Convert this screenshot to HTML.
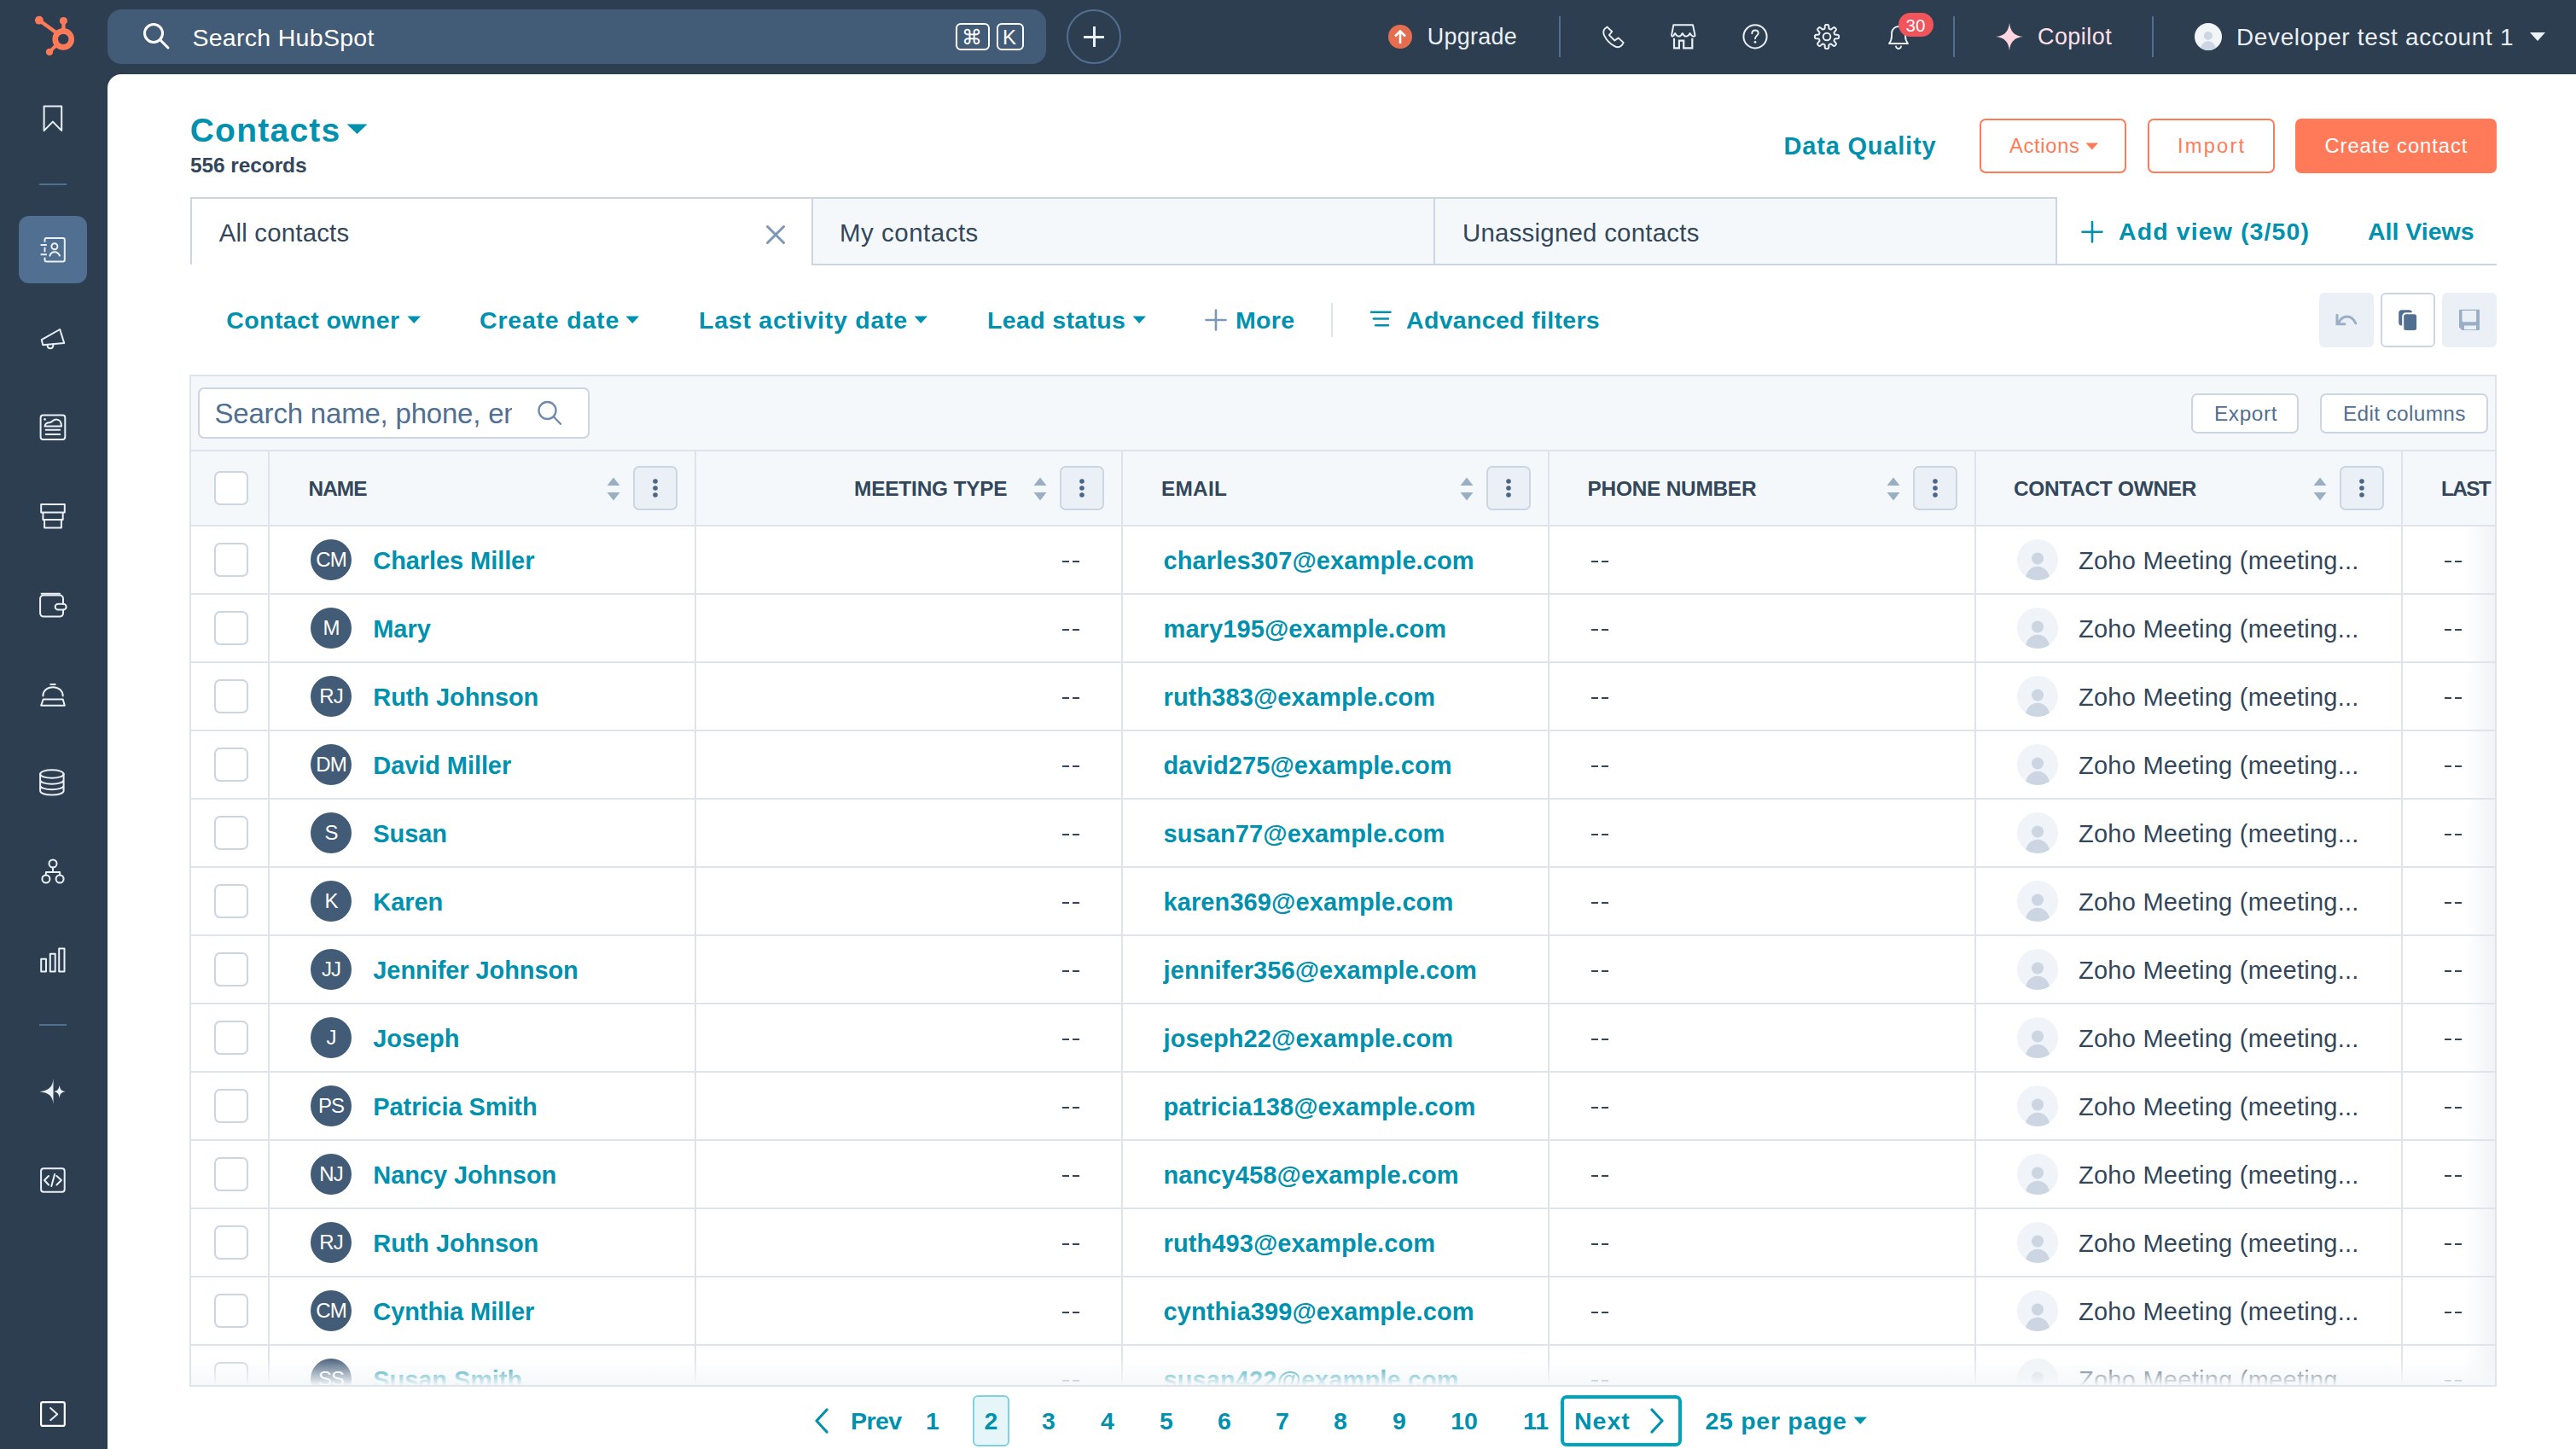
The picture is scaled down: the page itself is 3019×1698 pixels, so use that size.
<!DOCTYPE html><html><head><meta charset="utf-8"><style>
html,body{margin:0;padding:0;width:3019px;height:1698px;overflow:hidden;background:#2d3e50}
body{position:relative;font-family:"Liberation Sans",sans-serif}
.t{position:absolute;white-space:nowrap}
</style></head><body>
<div style="position:absolute;left:0px;top:0px;width:3019px;height:87px;background:#2d3e50"></div>
<div style="position:absolute;left:0px;top:0px;width:126px;height:1698px;background:#2d3e50"></div>
<div style="position:absolute;left:126px;top:87px;width:2893px;height:1611px;background:#fff;border-top-left-radius:16px"></div>
<svg style="position:absolute;left:30px;top:10px" width="70" height="65" viewBox="0 0 70 65"><g fill="#ff7a59" stroke="#ff7a59">
<circle cx="44.2" cy="35.9" r="9.5" fill="none" stroke-width="6.6"/>
<circle cx="44.4" cy="14.4" r="4.5" stroke="none"/>
<rect x="42.3" y="14" width="4.3" height="14" stroke="none"/>
<circle cx="15.9" cy="13.7" r="4.9" stroke="none"/>
<line x1="15.9" y1="13.7" x2="37" y2="29" stroke-width="4.2"/>
<circle cx="28" cy="50.9" r="4.2" stroke="none"/>
<line x1="28" y1="50.9" x2="37" y2="42" stroke-width="4"/>
</g></svg>
<div style="position:absolute;left:126px;top:11px;width:1100px;height:64px;background:#425b76;border-radius:16px"></div>
<svg style="position:absolute;left:165px;top:24px" width="40" height="40" viewBox="0 0 40 40"><circle cx="15" cy="15" r="10.5" fill="none" stroke="#fff" stroke-width="3"/><line x1="22.5" y1="22.5" x2="32" y2="32" stroke="#fff" stroke-width="3" stroke-linecap="round"/></svg>
<div class="t" style="left:225.4px;top:29.9px;font-size:28.5px;line-height:28.5px;color:#fff;letter-spacing:0.3px;">Search HubSpot</div>
<div style="position:absolute;left:1120px;top:27px;width:40px;height:32px;box-sizing:border-box;border:2px solid #fff;border-radius:6px"></div>
<div class="t" style="left:1127.0px;top:31.7px;font-size:24px;line-height:24px;color:#fff;">&#8984;</div>
<div style="position:absolute;left:1168px;top:27px;width:32px;height:32px;box-sizing:border-box;border:2px solid #fff;border-radius:6px"></div>
<div class="t" style="left:1175.0px;top:31.7px;font-size:24px;line-height:24px;color:#fff;">K</div>
<div style="position:absolute;left:1250px;top:11px;width:64px;height:64px;box-sizing:border-box;border:2px solid #516f90;border-radius:50%"></div>
<div style="position:absolute;left:1270px;top:41.5px;width:24px;height:3px;background:#eaf0f6"></div>
<div style="position:absolute;left:1280.5px;top:31px;width:3px;height:24px;background:#eaf0f6"></div>
<div style="position:absolute;left:1627px;top:29px;width:28px;height:28px;background:#e66e50;border-radius:50%"></div>
<svg style="position:absolute;left:1627px;top:29px" width="28" height="28" viewBox="0 0 28 28"><path d="M14 22V8M8 13.5L14 7.5L20 13.5" fill="none" stroke="#fff" stroke-width="2.6"/></svg>
<div class="t" style="left:1672.8px;top:29.7px;font-size:26.9px;line-height:26.9px;color:#eaf0f6;letter-spacing:0.3px;">Upgrade</div>
<div style="position:absolute;left:1827px;top:19px;width:2px;height:48px;background:#516f90"></div>
<div style="position:absolute;left:2289px;top:19px;width:2px;height:48px;background:#516f90"></div>
<div style="position:absolute;left:2522px;top:19px;width:2px;height:48px;background:#516f90"></div>
<svg style="position:absolute;left:1876px;top:28px" width="30" height="30" viewBox="0 0 30 30"><path d="M7.6 3.6L13.2 9L9.9 13.1L16.3 19.5L20.6 16.4L26.6 21.9L24.6 25.2C22.5 27.6 19.2 27.8 15.8 25.9C11 23.2 6.5 18.5 4.2 13.6C2.8 10.4 3 7.5 5 5.5Z" fill="none" stroke="#eaf0f6" stroke-width="1.9" stroke-linejoin="round" stroke-linecap="round"/></svg>
<svg style="position:absolute;left:1957px;top:27px" width="32" height="32" viewBox="0 0 32 32"><path d="M4.3 2.3H27L29.5 14.2C29.5 15.2 28.6 15.6 27.6 15.6C25.8 15.6 24.5 13.6 23.6 12C22.7 13.8 21.2 15.6 19.1 15.6C17 15.6 15.6 13.8 14.8 12C14 13.8 12.5 15.6 10.4 15.6C8.3 15.6 7 13.8 6.1 12C5.2 13.8 4 15.6 3.1 15.6C2.4 15.6 1.9 15 2.1 14Z" fill="none" stroke="#eaf0f6" stroke-width="1.9" stroke-linejoin="round" stroke-linecap="round"/><path d="M5 17.7V29.3H10.9V20.7H16.2V29.3H26.3V17.7" fill="none" stroke="#eaf0f6" stroke-width="2.2" stroke-linejoin="miter"/></svg>
<svg style="position:absolute;left:2041px;top:27px" width="32" height="32" viewBox="0 0 32 32"><circle cx="16" cy="15.8" r="13.6" fill="none" stroke="#eaf0f6" stroke-width="2"/><path d="M12.3 12.3C12.3 9.8 14 8.5 16 8.5C18 8.5 19.7 9.8 19.7 11.8C19.7 14.3 16 15 16 18.3" fill="none" stroke="#eaf0f6" stroke-width="1.9" stroke-linejoin="round" stroke-linecap="round" stroke-width="2"/><circle cx="16" cy="22.3" r="1.4" fill="#eaf0f6"/></svg>
<svg style="position:absolute;left:2125px;top:26.5px" width="32" height="32" viewBox="0 0 32 32"><path d="M16.00 1.90 L16.44 1.91 L16.88 1.95 L17.32 2.05 L17.73 2.28 L18.08 2.85 L18.28 4.05 L18.35 5.48 L18.48 6.35 L18.69 6.73 L18.95 6.92 L19.22 7.05 L19.50 7.17 L19.77 7.28 L20.05 7.39 L20.34 7.49 L20.65 7.54 L21.07 7.42 L21.78 6.90 L22.84 5.94 L23.82 5.23 L24.48 5.07 L24.93 5.20 L25.31 5.44 L25.65 5.73 L25.97 6.03 L26.27 6.35 L26.56 6.69 L26.80 7.07 L26.93 7.52 L26.77 8.18 L26.06 9.16 L25.10 10.22 L24.58 10.93 L24.46 11.35 L24.51 11.66 L24.61 11.95 L24.72 12.23 L24.83 12.50 L24.95 12.78 L25.08 13.05 L25.27 13.31 L25.65 13.52 L26.52 13.65 L27.95 13.72 L29.15 13.92 L29.72 14.27 L29.95 14.68 L30.05 15.12 L30.09 15.56 L30.10 16.00 L30.09 16.44 L30.05 16.88 L29.95 17.32 L29.72 17.73 L29.15 18.08 L27.95 18.28 L26.52 18.35 L25.65 18.48 L25.27 18.69 L25.08 18.95 L24.95 19.22 L24.83 19.50 L24.72 19.77 L24.61 20.05 L24.51 20.34 L24.46 20.65 L24.58 21.07 L25.10 21.78 L26.06 22.84 L26.77 23.82 L26.93 24.48 L26.80 24.93 L26.56 25.31 L26.27 25.65 L25.97 25.97 L25.65 26.27 L25.31 26.56 L24.93 26.80 L24.48 26.93 L23.82 26.77 L22.84 26.06 L21.78 25.10 L21.07 24.58 L20.65 24.46 L20.34 24.51 L20.05 24.61 L19.77 24.72 L19.50 24.83 L19.22 24.95 L18.95 25.08 L18.69 25.27 L18.48 25.65 L18.35 26.52 L18.28 27.95 L18.08 29.15 L17.73 29.72 L17.32 29.95 L16.88 30.05 L16.44 30.09 L16.00 30.10 L15.56 30.09 L15.12 30.05 L14.68 29.95 L14.27 29.72 L13.92 29.15 L13.72 27.95 L13.65 26.52 L13.52 25.65 L13.31 25.27 L13.05 25.08 L12.78 24.95 L12.50 24.83 L12.23 24.72 L11.95 24.61 L11.66 24.51 L11.35 24.46 L10.93 24.58 L10.22 25.10 L9.16 26.06 L8.18 26.77 L7.52 26.93 L7.07 26.80 L6.69 26.56 L6.35 26.27 L6.03 25.97 L5.73 25.65 L5.44 25.31 L5.20 24.93 L5.07 24.48 L5.23 23.82 L5.94 22.84 L6.90 21.78 L7.42 21.07 L7.54 20.65 L7.49 20.34 L7.39 20.05 L7.28 19.77 L7.17 19.50 L7.05 19.22 L6.92 18.95 L6.73 18.69 L6.35 18.48 L5.48 18.35 L4.05 18.28 L2.85 18.08 L2.28 17.73 L2.05 17.32 L1.95 16.88 L1.91 16.44 L1.90 16.00 L1.91 15.56 L1.95 15.12 L2.05 14.68 L2.28 14.27 L2.85 13.92 L4.05 13.72 L5.48 13.65 L6.35 13.52 L6.73 13.31 L6.92 13.05 L7.05 12.78 L7.17 12.50 L7.28 12.23 L7.39 11.95 L7.49 11.66 L7.54 11.35 L7.42 10.93 L6.90 10.22 L5.94 9.16 L5.23 8.18 L5.07 7.52 L5.20 7.07 L5.44 6.69 L5.73 6.35 L6.03 6.03 L6.35 5.73 L6.69 5.44 L7.07 5.20 L7.52 5.07 L8.18 5.23 L9.16 5.94 L10.22 6.90 L10.93 7.42 L11.35 7.54 L11.66 7.49 L11.95 7.39 L12.23 7.28 L12.50 7.17 L12.78 7.05 L13.05 6.92 L13.31 6.73 L13.52 6.35 L13.65 5.48 L13.72 4.05 L13.92 2.85 L14.27 2.28 L14.68 2.05 L15.12 1.95 L15.56 1.91Z" fill="none" stroke="#eaf0f6" stroke-width="2" stroke-linejoin="round"/><circle cx="16" cy="16" r="4.3" fill="none" stroke="#eaf0f6" stroke-width="2"/></svg>
<svg style="position:absolute;left:2209px;top:25.5px" width="32" height="34" viewBox="0 0 32 34"><path d="M5 25C7 22.5 8 20 8 16V13C8 8.5 11.5 5 16 5C20.5 5 24 8.5 24 13V16C24 20 25 22.5 27 25Z M13 28.5C13.5 30 14.5 31 16 31C17.5 31 18.5 30 19 28.5" fill="none" stroke="#eaf0f6" stroke-width="1.9" stroke-linejoin="round" stroke-linecap="round"/></svg>
<div style="position:absolute;left:2225px;top:15px;width:41px;height:28px;background:#f2545b;border-radius:14px"></div>
<div class="t" style="left:2233.5px;top:19.6px;font-size:20.5px;line-height:20.5px;color:#fff;">30</div>
<svg style="position:absolute;left:2338px;top:26px" width="34" height="34" viewBox="0 0 34 34"><path d="M17 1C18 11 23 16 33 17C23 18 18 23 17 33C16 23 11 18 1 17C11 16 16 11 17 1Z" fill="#ffd6e0"/></svg>
<div class="t" style="left:2388.0px;top:29.7px;font-size:26.9px;line-height:26.9px;color:#ffe0ea;letter-spacing:0.5px;">Copilot</div>
<svg style="position:absolute;left:2572px;top:27px" width="32" height="32" viewBox="0 0 32 32"><clipPath id="acl"><circle cx="16" cy="16" r="16"/></clipPath><circle cx="16" cy="16" r="16" fill="#f2f5f8"/><circle cx="15.9" cy="15" r="5" fill="#cbd6e2"/><path d="M6.5 33C7 25.5 11 21.2 16 21.2C21 21.2 25 25.5 25.5 33Z" fill="#cbd6e2" clip-path="url(#acl)"/></svg>
<div class="t" style="left:2621.0px;top:29.7px;font-size:27.9px;line-height:27.9px;color:#eaf0f6;letter-spacing:0.69px;">Developer test account 1</div>
<svg style="position:absolute;left:2964px;top:37px" width="20" height="12" viewBox="0 0 20 12"><path d="M1 1H19L10 11Z" fill="#eaf0f6"/></svg>
<svg style="position:absolute;left:44px;top:121px" width="36" height="36" viewBox="0 0 36 36"><path d="M7.6 3.5H28.2V32.1L17.9 21.6L7.6 32.1Z" fill="none" stroke="#eaf0f6" stroke-width="2" stroke-linejoin="round" stroke-linecap="round"/></svg>
<div style="position:absolute;left:46px;top:215px;width:32px;height:2px;background:#516f90"></div>
<div style="position:absolute;left:22px;top:253px;width:80px;height:79px;background:#516f90;border-radius:12px"></div>
<svg style="position:absolute;left:44px;top:275px" width="36" height="36" viewBox="0 0 36 36"><path d="M8.5 8V6.1C8.5 5 9.3 4.1 10.4 4.1H29.8C30.9 4.1 31.8 5 31.8 6.1V29.6C31.8 30.7 30.9 31.6 29.8 31.6H10.4C9.3 31.6 8.5 30.7 8.5 29.6V27.5 M8.5 15.5V19.5" fill="none" stroke="#eaf0f6" stroke-width="2" stroke-linejoin="round" stroke-linecap="round"/><path d="M4.3 11.9H10.1M4.3 23.2H10.1" fill="none" stroke="#eaf0f6" stroke-width="2" stroke-linejoin="round" stroke-linecap="round"/><circle cx="19.9" cy="13.8" r="3.5" fill="none" stroke="#eaf0f6" stroke-width="2" stroke-linejoin="round" stroke-linecap="round"/><path d="M14.4 24.7C15.5 21.5 17.5 20.3 20 20.3C22.5 20.3 24.5 21.5 26 24.7" fill="none" stroke="#eaf0f6" stroke-width="2" stroke-linejoin="round" stroke-linecap="round"/></svg>
<svg style="position:absolute;left:44px;top:378px" width="36" height="36" viewBox="0 0 36 36"><path d="M4.7 20.1L26.2 8L31.2 24L6.3 26.2Z" fill="none" stroke="#eaf0f6" stroke-width="2" stroke-linejoin="round" stroke-linecap="round"/><path d="M11.5 26C11.5 28.5 13 30.3 15 30.3C17 30.3 18.5 28.5 18.5 25.5" fill="none" stroke="#eaf0f6" stroke-width="2" stroke-linejoin="round" stroke-linecap="round"/></svg>
<svg style="position:absolute;left:44px;top:482px" width="36" height="36" viewBox="0 0 36 36"><rect x="3.6" y="4.4" width="28.7" height="28.7" rx="3" fill="none" stroke="#eaf0f6" stroke-width="2" stroke-linejoin="round" stroke-linecap="round"/><path d="M9.7 21.8H26.2M9.7 27H26.2" fill="none" stroke="#eaf0f6" stroke-width="2" stroke-linejoin="round" stroke-linecap="round"/><path d="M8.5 17.5C9 14.5 11 13.3 14 13.3C17 13.3 18 9.5 22 9.5C25.5 9.5 28 12.5 28 17.5Z" fill="none" stroke="#eaf0f6" stroke-width="2" stroke-linejoin="round" stroke-linecap="round"/><circle cx="8.6" cy="9.4" r="1.3" fill="#eaf0f6"/></svg>
<svg style="position:absolute;left:44px;top:587px" width="36" height="36" viewBox="0 0 36 36"><path d="M4.2 4.1H31.8V13.6H4.2Z M6.4 13.6V22H29.7V13.6 M8.1 22V31.6H27.9V22" fill="none" stroke="#eaf0f6" stroke-width="2" stroke-linejoin="round" stroke-linecap="round"/></svg>
<svg style="position:absolute;left:44px;top:691px" width="36" height="36" viewBox="0 0 36 36"><path d="M4.6 4.7H26" fill="none" stroke="#eaf0f6" stroke-width="2" stroke-linejoin="round" stroke-linecap="round"/><path d="M30 16.7V10.5C30 8.3 28.2 6.5 26 6.5H7.1C4.9 6.5 3.1 8.3 3.1 10.5V27.6C3.1 29.8 4.9 31.6 7.1 31.6H26C28.2 31.6 30 29.8 30 27.6V23.6" fill="none" stroke="#eaf0f6" stroke-width="2" stroke-linejoin="round" stroke-linecap="round"/><rect x="20.7" y="16.7" width="12.9" height="6.9" rx="3.4" fill="none" stroke="#eaf0f6" stroke-width="2" stroke-linejoin="round" stroke-linecap="round"/></svg>
<svg style="position:absolute;left:44px;top:795px" width="36" height="36" viewBox="0 0 36 36"><path d="M6.4 20.5C6.4 14.5 11.5 10.2 18 10.2C24.5 10.2 29.7 14.5 29.7 20.5 M6.7 24.5H29.7L31.8 31.7H4.2Z M15.3 6.9H20.7" fill="none" stroke="#eaf0f6" stroke-width="2" stroke-linejoin="round" stroke-linecap="round"/></svg>
<svg style="position:absolute;left:44px;top:899px" width="36" height="36" viewBox="0 0 36 36"><ellipse cx="16.85" cy="8" rx="13.75" ry="4.8" fill="none" stroke="#eaf0f6" stroke-width="2" stroke-linejoin="round" stroke-linecap="round"/><path d="M3.1 8V27.8C3.1 30.5 9.2 32.6 16.85 32.6C24.5 32.6 30.6 30.5 30.6 27.8V8 M3.1 15C3.1 17.7 9.2 19.8 16.85 19.8C24.5 19.8 30.6 17.7 30.6 15 M3.1 21.5C3.1 24.2 9.2 26.3 16.85 26.3C24.5 26.3 30.6 24.2 30.6 21.5" fill="none" stroke="#eaf0f6" stroke-width="2" stroke-linejoin="round" stroke-linecap="round"/></svg>
<svg style="position:absolute;left:44px;top:1003px" width="36" height="36" viewBox="0 0 36 36"><circle cx="18" cy="9" r="4.5" fill="none" stroke="#eaf0f6" stroke-width="2" stroke-linejoin="round" stroke-linecap="round"/><circle cx="9.9" cy="27" r="4.5" fill="none" stroke="#eaf0f6" stroke-width="2" stroke-linejoin="round" stroke-linecap="round"/><circle cx="26.1" cy="27" r="4.5" fill="none" stroke="#eaf0f6" stroke-width="2" stroke-linejoin="round" stroke-linecap="round"/><path d="M18 13.5V18.9 M9.9 22.5V18.9H26.1V22.5" fill="none" stroke="#eaf0f6" stroke-width="2" stroke-linejoin="round" stroke-linecap="round"/></svg>
<svg style="position:absolute;left:44px;top:1107px" width="36" height="36" viewBox="0 0 36 36"><rect x="4.2" y="16.8" width="5.8" height="14.7" fill="none" stroke="#eaf0f6" stroke-width="2" stroke-linejoin="round" stroke-linecap="round"/><rect x="14.8" y="10.8" width="5.9" height="20.7" fill="none" stroke="#eaf0f6" stroke-width="2" stroke-linejoin="round" stroke-linecap="round"/><rect x="25.2" y="4.6" width="6.3" height="26.9" fill="none" stroke="#eaf0f6" stroke-width="2" stroke-linejoin="round" stroke-linecap="round"/></svg>
<div style="position:absolute;left:46px;top:1200px;width:32px;height:2px;background:#516f90"></div>
<svg style="position:absolute;left:44px;top:1261px" width="36" height="36" viewBox="0 0 36 36"><path d="M18.5 2.2C18 12 14 17 2.5 18.2C14 19.5 18 24 18.5 33.7Z" fill="#eaf0f6"/><path d="M25.7 10.5C26.3 15 27.5 17.5 32.8 18.2C27.5 19 26.3 21 25.7 26C25 21 23.8 19 19 18.2C23.8 17.5 25 15 25.7 10.5Z" fill="#eaf0f6"/></svg>
<svg style="position:absolute;left:44px;top:1365px" width="36" height="36" viewBox="0 0 36 36"><rect x="4.1" y="4.2" width="27.6" height="27.6" rx="3" fill="none" stroke="#eaf0f6" stroke-width="2" stroke-linejoin="round" stroke-linecap="round"/><path d="M13 13L8 18L13 23.5 M20.1 11L16.3 25 M22.4 13L27.9 18L22.4 23.5" fill="none" stroke="#eaf0f6" stroke-width="2" stroke-linejoin="round" stroke-linecap="round"/></svg>
<svg style="position:absolute;left:44px;top:1638px" width="36" height="36" viewBox="0 0 36 36"><rect x="4.1" y="5.2" width="27.7" height="27.7" rx="2" fill="none" stroke="#fff" stroke-width="2.2"/><path d="M15.2 11.9L23.2 19.2L15.2 26.2" fill="none" stroke="#eaf0f6" stroke-width="2" stroke-linejoin="round" stroke-linecap="round" stroke-width="2.5"/></svg>
<div class="t" style="left:222.7px;top:133.0px;font-size:39px;line-height:39px;color:#0091ae;font-weight:700;letter-spacing:1.25px;">Contacts</div>
<svg style="position:absolute;left:406px;top:145px" width="26" height="13" viewBox="0 0 26 13"><path d="M0.5 0.5H24.5L12.5 12Z" fill="#0091ae"/></svg>
<div class="t" style="left:223.0px;top:182.1px;font-size:24.5px;line-height:24.5px;color:#33475b;font-weight:700;letter-spacing:-0.1px;">556 records</div>
<div class="t" style="left:2090.5px;top:157.2px;font-size:29px;line-height:29px;color:#0091ae;font-weight:700;letter-spacing:0.8px;">Data Quality</div>
<div style="position:absolute;left:2320px;top:139px;width:172px;height:64px;box-sizing:border-box;border:2px solid #ff7a59;border-radius:7px;background:#fff"></div>
<div class="t" style="left:2355.0px;top:159.9px;font-size:23.7px;line-height:23.7px;color:#ff7a59;letter-spacing:0.7px;">Actions</div>
<svg style="position:absolute;left:2444px;top:167px" width="16" height="9" viewBox="0 0 16 9"><path d="M0.5 0.5H15L7.7 8.5Z" fill="#ff7a59"/></svg>
<div style="position:absolute;left:2517px;top:139px;width:149px;height:64px;box-sizing:border-box;border:2px solid #ff7a59;border-radius:7px;background:#fff"></div>
<div class="t" style="left:2552.0px;top:159.9px;font-size:23.7px;line-height:23.7px;color:#ff7a59;letter-spacing:2.2px;">Import</div>
<div style="position:absolute;left:2690px;top:139px;width:236px;height:64px;background:#ff7a59;border-radius:7px"></div>
<div class="t" style="left:2724.4px;top:159.9px;font-size:23.7px;line-height:23.7px;color:#fff;letter-spacing:1.0px;">Create contact</div>
<div style="position:absolute;left:223px;top:231px;width:728px;height:79px;box-sizing:border-box;border-top:2px solid #cbd6e2;border-left:2px solid #cbd6e2;background:#fff"></div>
<div style="position:absolute;left:951px;top:231px;width:731px;height:80px;box-sizing:border-box;border:2px solid #cbd6e2;background:#f5f8fa"></div>
<div style="position:absolute;left:1680px;top:231px;width:731px;height:80px;box-sizing:border-box;border:2px solid #cbd6e2;background:#f5f8fa"></div>
<div style="position:absolute;left:2411px;top:309px;width:515px;height:2px;background:#cbd6e2"></div>
<div class="t" style="left:256.7px;top:258.2px;font-size:29.4px;line-height:29.4px;color:#33475b;letter-spacing:0.2px;">All contacts</div>
<svg style="position:absolute;left:896px;top:262px" width="26" height="26" viewBox="0 0 26 26"><path d="M3.5 3.5L22.5 22.5M22.5 3.5L3.5 22.5" stroke="#7c98b6" stroke-width="3" stroke-linecap="round"/></svg>
<div class="t" style="left:984.0px;top:258.2px;font-size:29.4px;line-height:29.4px;color:#33475b;letter-spacing:0.55px;">My contacts</div>
<div class="t" style="left:1714.0px;top:258.2px;font-size:29.4px;line-height:29.4px;color:#33475b;letter-spacing:0.25px;">Unassigned contacts</div>
<svg style="position:absolute;left:2437px;top:256.5px" width="30" height="30" viewBox="0 0 30 30"><path d="M15 3V26.5M3.5 14.8H26.5" stroke="#0091ae" stroke-width="2.6" stroke-linecap="round"/></svg>
<div class="t" style="left:2483.0px;top:256.9px;font-size:28.5px;line-height:28.5px;color:#0091ae;font-weight:700;letter-spacing:1.1px;">Add view (3/50)</div>
<div class="t" style="left:2775.0px;top:256.9px;font-size:28.5px;line-height:28.5px;color:#0091ae;font-weight:700;">All Views</div>
<div class="t" style="left:265.3px;top:361.0px;font-size:28.5px;line-height:28.5px;color:#0091ae;font-weight:700;letter-spacing:0.4px;">Contact owner</div>
<svg style="position:absolute;left:476.5px;top:370px" width="17" height="10" viewBox="0 0 17 10"><path d="M0.5 0.5H16L8.2 9Z" fill="#0091ae"/></svg>
<div class="t" style="left:562.0px;top:361.0px;font-size:28.5px;line-height:28.5px;color:#0091ae;font-weight:700;letter-spacing:0.8px;">Create date</div>
<svg style="position:absolute;left:733px;top:370px" width="17" height="10" viewBox="0 0 17 10"><path d="M0.5 0.5H16L8.2 9Z" fill="#0091ae"/></svg>
<div class="t" style="left:819.0px;top:361.0px;font-size:28.5px;line-height:28.5px;color:#0091ae;font-weight:700;letter-spacing:0.76px;">Last activity date</div>
<svg style="position:absolute;left:1071px;top:370px" width="17" height="10" viewBox="0 0 17 10"><path d="M0.5 0.5H16L8.2 9Z" fill="#0091ae"/></svg>
<div class="t" style="left:1157.0px;top:361.0px;font-size:28.5px;line-height:28.5px;color:#0091ae;font-weight:700;letter-spacing:0.35px;">Lead status</div>
<svg style="position:absolute;left:1326.5px;top:370px" width="17" height="10" viewBox="0 0 17 10"><path d="M0.5 0.5H16L8.2 9Z" fill="#0091ae"/></svg>
<svg style="position:absolute;left:1410px;top:360px" width="30" height="30" viewBox="0 0 30 30"><path d="M15 3.5V26.5M3.5 15H26.5" stroke="#7c98b6" stroke-width="2.6" stroke-linecap="round"/></svg>
<div class="t" style="left:1448.0px;top:361.0px;font-size:28.5px;line-height:28.5px;color:#0091ae;font-weight:700;letter-spacing:0.3px;">More</div>
<div style="position:absolute;left:1560px;top:355px;width:2px;height:40px;background:#dfe3eb"></div>
<svg style="position:absolute;left:1603px;top:362px" width="30" height="26" viewBox="0 0 30 26"><path d="M4 3.7H26.5M6.8 11.5H24M9.2 19.3H24" stroke="#0091ae" stroke-width="2.6" stroke-linecap="round"/></svg>
<div class="t" style="left:1648.0px;top:361.0px;font-size:28.5px;line-height:28.5px;color:#0091ae;font-weight:700;letter-spacing:0.33px;">Advanced filters</div>
<div style="position:absolute;left:2718px;top:343px;width:64px;height:64px;background:#eaf0f6;border-radius:6px"></div>
<svg style="position:absolute;left:2732px;top:357px" width="36" height="36" viewBox="0 0 36 36"><path d="M7 12.2V22.8H16" fill="none" stroke="#9aafc6" stroke-width="3" stroke-linecap="round" stroke-linejoin="miter"/><path d="M8.5 21.5C11 16.5 14.5 14 18.5 14C22.5 14 26.5 16.5 28.8 21.8" fill="none" stroke="#9aafc6" stroke-width="3" stroke-linecap="round"/></svg>
<div style="position:absolute;left:2790px;top:343px;width:64px;height:64px;box-sizing:border-box;border:2px solid #cbd6e2;border-radius:6px;background:#fff"></div>
<svg style="position:absolute;left:2804px;top:357px" width="36" height="36" viewBox="0 0 36 36"><rect x="7.2" y="6.2" width="15.8" height="18.3" rx="3.5" fill="#516f90"/><rect x="12.2" y="10.3" width="16.9" height="20.8" rx="3.5" fill="#516f90" stroke="#fff" stroke-width="2"/></svg>
<div style="position:absolute;left:2862px;top:343px;width:64px;height:64px;background:#eaf0f6;border-radius:6px"></div>
<svg style="position:absolute;left:2876px;top:357px" width="36" height="36" viewBox="0 0 36 36"><path d="M6 7C6 6.3 6.5 5.8 7.2 5.8H28.8C29.5 5.8 30 6.3 30 7V28.9C30 29.6 29.5 30.1 28.8 30.1H9.5L6 26.6Z" fill="#9aafc6"/><path d="M9.5 7H26.1V18.8C26.1 19.6 25.5 20.3 24.7 20.3H10.9C10.1 20.3 9.5 19.6 9.5 18.8Z" fill="#eaf0f6"/><rect x="12" y="24.5" width="14" height="4.7" fill="#eaf0f6"/></svg>
<div style="position:absolute;left:222px;top:439px;width:2704px;height:1186px;box-sizing:border-box;border:2px solid #dfe3eb;background:#fff;overflow:hidden"></div>
<div style="position:absolute;left:224px;top:441px;width:2700px;height:174px;background:#f5f8fa"></div>
<div style="position:absolute;left:232px;top:454px;width:459px;height:60px;box-sizing:border-box;border:2px solid #cbd6e2;border-radius:7px;background:#fff"></div>
<div style="position:absolute;left:251px;top:455px;width:349px;height:56px;overflow:hidden"><div class="t" style="left:0.5px;top:13.1px;font-size:33px;line-height:33px;color:#516f90;letter-spacing:-0.2px;">Search name, phone, email</div></div>
<svg style="position:absolute;left:628px;top:467px" width="34" height="34" viewBox="0 0 34 34"><circle cx="13.5" cy="14" r="10" fill="none" stroke="#6f8bab" stroke-width="2.3"/><line x1="20.8" y1="21.3" x2="29" y2="29.8" stroke="#6f8bab" stroke-width="2.3" stroke-linecap="round"/></svg>
<div style="position:absolute;left:2568px;top:461px;width:126px;height:47px;box-sizing:border-box;border:2px solid #cbd6e2;border-radius:7px;background:#fff"></div>
<div class="t" style="left:2595.0px;top:473.3px;font-size:24.4px;line-height:24.4px;color:#516f90;letter-spacing:0.6px;">Export</div>
<div style="position:absolute;left:2719px;top:461px;width:197px;height:47px;box-sizing:border-box;border:2px solid #cbd6e2;border-radius:7px;background:#fff"></div>
<div class="t" style="left:2746.0px;top:473.3px;font-size:24.4px;line-height:24.4px;color:#516f90;letter-spacing:0.35px;">Edit columns</div>
<div style="position:absolute;left:224px;top:527px;width:2700px;height:2px;background:#dfe3eb"></div>
<div style="position:absolute;left:224px;top:615px;width:2700px;height:2px;background:#dfe3eb"></div>
<div style="position:absolute;left:314px;top:529px;width:2px;height:1094px;background:#dfe3eb"></div>
<div style="position:absolute;left:814px;top:529px;width:2px;height:1094px;background:#dfe3eb"></div>
<div style="position:absolute;left:1314px;top:529px;width:2px;height:1094px;background:#dfe3eb"></div>
<div style="position:absolute;left:1814px;top:529px;width:2px;height:1094px;background:#dfe3eb"></div>
<div style="position:absolute;left:2314px;top:529px;width:2px;height:1094px;background:#dfe3eb"></div>
<div style="position:absolute;left:2814px;top:529px;width:2px;height:1094px;background:#dfe3eb"></div>
<div style="position:absolute;left:251px;top:552px;width:40px;height:40px;box-sizing:border-box;border:2px solid #cbd6e2;border-radius:7px;background:#fff"></div>
<div class="t" style="left:361.6px;top:560.6px;font-size:24.4px;line-height:24.4px;color:#33475b;font-weight:700;letter-spacing:-1.0px;">NAME</div>
<svg style="position:absolute;left:710.5px;top:559px" width="16" height="28" viewBox="0 0 16 28"><path d="M0.5 10H15.5L8 0.5Z M0.5 18H15.5L8 27.5Z" fill="#99afc4"/></svg>
<div style="position:absolute;left:742px;top:546px;width:52px;height:52px;box-sizing:border-box;border:2px solid #cbd6e2;border-radius:7px;background:#eaf0f6"></div>
<svg style="position:absolute;left:742px;top:546px" width="52" height="52" viewBox="0 0 52 52"><circle cx="26" cy="18" r="2.8" fill="#4a6587"/><circle cx="26" cy="26" r="2.8" fill="#4a6587"/><circle cx="26" cy="34" r="2.8" fill="#4a6587"/></svg>
<div class="t" style="left:1001.0px;top:560.6px;font-size:24.4px;line-height:24.4px;color:#33475b;font-weight:700;letter-spacing:-0.18px;">MEETING TYPE</div>
<svg style="position:absolute;left:1210.5px;top:559px" width="16" height="28" viewBox="0 0 16 28"><path d="M0.5 10H15.5L8 0.5Z M0.5 18H15.5L8 27.5Z" fill="#99afc4"/></svg>
<div style="position:absolute;left:1242px;top:546px;width:52px;height:52px;box-sizing:border-box;border:2px solid #cbd6e2;border-radius:7px;background:#eaf0f6"></div>
<svg style="position:absolute;left:1242px;top:546px" width="52" height="52" viewBox="0 0 52 52"><circle cx="26" cy="18" r="2.8" fill="#4a6587"/><circle cx="26" cy="26" r="2.8" fill="#4a6587"/><circle cx="26" cy="34" r="2.8" fill="#4a6587"/></svg>
<div class="t" style="left:1361.0px;top:560.6px;font-size:24.4px;line-height:24.4px;color:#33475b;font-weight:700;letter-spacing:0.25px;">EMAIL</div>
<svg style="position:absolute;left:1710.5px;top:559px" width="16" height="28" viewBox="0 0 16 28"><path d="M0.5 10H15.5L8 0.5Z M0.5 18H15.5L8 27.5Z" fill="#99afc4"/></svg>
<div style="position:absolute;left:1742px;top:546px;width:52px;height:52px;box-sizing:border-box;border:2px solid #cbd6e2;border-radius:7px;background:#eaf0f6"></div>
<svg style="position:absolute;left:1742px;top:546px" width="52" height="52" viewBox="0 0 52 52"><circle cx="26" cy="18" r="2.8" fill="#4a6587"/><circle cx="26" cy="26" r="2.8" fill="#4a6587"/><circle cx="26" cy="34" r="2.8" fill="#4a6587"/></svg>
<div class="t" style="left:1860.5px;top:560.6px;font-size:24.4px;line-height:24.4px;color:#33475b;font-weight:700;letter-spacing:-0.23px;">PHONE NUMBER</div>
<svg style="position:absolute;left:2210.5px;top:559px" width="16" height="28" viewBox="0 0 16 28"><path d="M0.5 10H15.5L8 0.5Z M0.5 18H15.5L8 27.5Z" fill="#99afc4"/></svg>
<div style="position:absolute;left:2242px;top:546px;width:52px;height:52px;box-sizing:border-box;border:2px solid #cbd6e2;border-radius:7px;background:#eaf0f6"></div>
<svg style="position:absolute;left:2242px;top:546px" width="52" height="52" viewBox="0 0 52 52"><circle cx="26" cy="18" r="2.8" fill="#4a6587"/><circle cx="26" cy="26" r="2.8" fill="#4a6587"/><circle cx="26" cy="34" r="2.8" fill="#4a6587"/></svg>
<div class="t" style="left:2360.0px;top:560.6px;font-size:24.4px;line-height:24.4px;color:#33475b;font-weight:700;letter-spacing:-0.28px;">CONTACT OWNER</div>
<svg style="position:absolute;left:2710.5px;top:559px" width="16" height="28" viewBox="0 0 16 28"><path d="M0.5 10H15.5L8 0.5Z M0.5 18H15.5L8 27.5Z" fill="#99afc4"/></svg>
<div style="position:absolute;left:2742px;top:546px;width:52px;height:52px;box-sizing:border-box;border:2px solid #cbd6e2;border-radius:7px;background:#eaf0f6"></div>
<svg style="position:absolute;left:2742px;top:546px" width="52" height="52" viewBox="0 0 52 52"><circle cx="26" cy="18" r="2.8" fill="#4a6587"/><circle cx="26" cy="26" r="2.8" fill="#4a6587"/><circle cx="26" cy="34" r="2.8" fill="#4a6587"/></svg>
<div class="t" style="left:2861.0px;top:560.6px;font-size:24.4px;line-height:24.4px;color:#33475b;font-weight:700;letter-spacing:-1.65px;">LAST</div>
<div style="position:absolute;left:0;top:0;width:3019px;height:1623px;overflow:hidden"><div style="position:absolute;left:224px;top:695px;width:2700px;height:2px;background:#dfe3eb"></div>
<div style="position:absolute;left:251px;top:636px;width:40px;height:40px;box-sizing:border-box;border:2px solid #cbd6e2;border-radius:7px;background:#fff"></div>
<div style="position:absolute;left:364px;top:632px;width:48px;height:48px;background:#425b76;border-radius:50%"></div>
<div class="t" style="left:364px;top:644.0px;width:48px;line-height:24px;text-align:center;font-size:24px;color:#fff;letter-spacing:-1px">CM</div>
<div class="t" style="left:437.3px;top:642.5px;font-size:29px;line-height:29px;color:#0091ae;font-weight:700;letter-spacing:-0.08px;">Charles Miller</div>
<div style="position:absolute;left:1245px;top:656.5px;width:8px;height:2.6px;background:#33475b"></div>
<div style="position:absolute;left:1257px;top:656.5px;width:8px;height:2.6px;background:#33475b"></div>
<div class="t" style="left:1363.5px;top:642.5px;font-size:29px;line-height:29px;color:#0091ae;font-weight:700;letter-spacing:0.1px;">charles307@example.com</div>
<div style="position:absolute;left:1865px;top:656.5px;width:8px;height:2.6px;background:#33475b"></div>
<div style="position:absolute;left:1877px;top:656.5px;width:8px;height:2.6px;background:#33475b"></div>
<svg style="position:absolute;left:2364px;top:632px" width="48" height="48" viewBox="0 0 48 48"><circle cx="24" cy="24" r="24" fill="#f0f3f7"/><circle cx="24" cy="22.5" r="7" fill="#cbd6e2"/><clipPath id="oc0"><circle cx="24" cy="24" r="24"/></clipPath><path d="M9.5 48C10 38 16 31.7 24 31.7C32 31.7 38 38 38.5 48Z" fill="#cbd6e2" clip-path="url(#oc0)"/></svg>
<div class="t" style="left:2436.0px;top:642.5px;font-size:29px;line-height:29px;color:#33475b;letter-spacing:0.26px;">Zoho Meeting (meeting...</div>
<div style="position:absolute;left:2865px;top:656.5px;width:8px;height:2.6px;background:#33475b"></div>
<div style="position:absolute;left:2877px;top:656.5px;width:8px;height:2.6px;background:#33475b"></div>
<div style="position:absolute;left:224px;top:775px;width:2700px;height:2px;background:#dfe3eb"></div>
<div style="position:absolute;left:251px;top:716px;width:40px;height:40px;box-sizing:border-box;border:2px solid #cbd6e2;border-radius:7px;background:#fff"></div>
<div style="position:absolute;left:364px;top:712px;width:48px;height:48px;background:#425b76;border-radius:50%"></div>
<div class="t" style="left:364px;top:724.0px;width:48px;line-height:24px;text-align:center;font-size:24px;color:#fff;letter-spacing:-1px">M</div>
<div class="t" style="left:437.3px;top:722.5px;font-size:29px;line-height:29px;color:#0091ae;font-weight:700;letter-spacing:-0.08px;">Mary</div>
<div style="position:absolute;left:1245px;top:736.5px;width:8px;height:2.6px;background:#33475b"></div>
<div style="position:absolute;left:1257px;top:736.5px;width:8px;height:2.6px;background:#33475b"></div>
<div class="t" style="left:1363.5px;top:722.5px;font-size:29px;line-height:29px;color:#0091ae;font-weight:700;letter-spacing:0.1px;">mary195@example.com</div>
<div style="position:absolute;left:1865px;top:736.5px;width:8px;height:2.6px;background:#33475b"></div>
<div style="position:absolute;left:1877px;top:736.5px;width:8px;height:2.6px;background:#33475b"></div>
<svg style="position:absolute;left:2364px;top:712px" width="48" height="48" viewBox="0 0 48 48"><circle cx="24" cy="24" r="24" fill="#f0f3f7"/><circle cx="24" cy="22.5" r="7" fill="#cbd6e2"/><clipPath id="oc1"><circle cx="24" cy="24" r="24"/></clipPath><path d="M9.5 48C10 38 16 31.7 24 31.7C32 31.7 38 38 38.5 48Z" fill="#cbd6e2" clip-path="url(#oc1)"/></svg>
<div class="t" style="left:2436.0px;top:722.5px;font-size:29px;line-height:29px;color:#33475b;letter-spacing:0.26px;">Zoho Meeting (meeting...</div>
<div style="position:absolute;left:2865px;top:736.5px;width:8px;height:2.6px;background:#33475b"></div>
<div style="position:absolute;left:2877px;top:736.5px;width:8px;height:2.6px;background:#33475b"></div>
<div style="position:absolute;left:224px;top:855px;width:2700px;height:2px;background:#dfe3eb"></div>
<div style="position:absolute;left:251px;top:796px;width:40px;height:40px;box-sizing:border-box;border:2px solid #cbd6e2;border-radius:7px;background:#fff"></div>
<div style="position:absolute;left:364px;top:792px;width:48px;height:48px;background:#425b76;border-radius:50%"></div>
<div class="t" style="left:364px;top:804.0px;width:48px;line-height:24px;text-align:center;font-size:24px;color:#fff;letter-spacing:-1px">RJ</div>
<div class="t" style="left:437.3px;top:802.5px;font-size:29px;line-height:29px;color:#0091ae;font-weight:700;letter-spacing:-0.08px;">Ruth Johnson</div>
<div style="position:absolute;left:1245px;top:816.5px;width:8px;height:2.6px;background:#33475b"></div>
<div style="position:absolute;left:1257px;top:816.5px;width:8px;height:2.6px;background:#33475b"></div>
<div class="t" style="left:1363.5px;top:802.5px;font-size:29px;line-height:29px;color:#0091ae;font-weight:700;letter-spacing:0.1px;">ruth383@example.com</div>
<div style="position:absolute;left:1865px;top:816.5px;width:8px;height:2.6px;background:#33475b"></div>
<div style="position:absolute;left:1877px;top:816.5px;width:8px;height:2.6px;background:#33475b"></div>
<svg style="position:absolute;left:2364px;top:792px" width="48" height="48" viewBox="0 0 48 48"><circle cx="24" cy="24" r="24" fill="#f0f3f7"/><circle cx="24" cy="22.5" r="7" fill="#cbd6e2"/><clipPath id="oc2"><circle cx="24" cy="24" r="24"/></clipPath><path d="M9.5 48C10 38 16 31.7 24 31.7C32 31.7 38 38 38.5 48Z" fill="#cbd6e2" clip-path="url(#oc2)"/></svg>
<div class="t" style="left:2436.0px;top:802.5px;font-size:29px;line-height:29px;color:#33475b;letter-spacing:0.26px;">Zoho Meeting (meeting...</div>
<div style="position:absolute;left:2865px;top:816.5px;width:8px;height:2.6px;background:#33475b"></div>
<div style="position:absolute;left:2877px;top:816.5px;width:8px;height:2.6px;background:#33475b"></div>
<div style="position:absolute;left:224px;top:935px;width:2700px;height:2px;background:#dfe3eb"></div>
<div style="position:absolute;left:251px;top:876px;width:40px;height:40px;box-sizing:border-box;border:2px solid #cbd6e2;border-radius:7px;background:#fff"></div>
<div style="position:absolute;left:364px;top:872px;width:48px;height:48px;background:#425b76;border-radius:50%"></div>
<div class="t" style="left:364px;top:884.0px;width:48px;line-height:24px;text-align:center;font-size:24px;color:#fff;letter-spacing:-1px">DM</div>
<div class="t" style="left:437.3px;top:882.5px;font-size:29px;line-height:29px;color:#0091ae;font-weight:700;letter-spacing:-0.08px;">David Miller</div>
<div style="position:absolute;left:1245px;top:896.5px;width:8px;height:2.6px;background:#33475b"></div>
<div style="position:absolute;left:1257px;top:896.5px;width:8px;height:2.6px;background:#33475b"></div>
<div class="t" style="left:1363.5px;top:882.5px;font-size:29px;line-height:29px;color:#0091ae;font-weight:700;letter-spacing:0.1px;">david275@example.com</div>
<div style="position:absolute;left:1865px;top:896.5px;width:8px;height:2.6px;background:#33475b"></div>
<div style="position:absolute;left:1877px;top:896.5px;width:8px;height:2.6px;background:#33475b"></div>
<svg style="position:absolute;left:2364px;top:872px" width="48" height="48" viewBox="0 0 48 48"><circle cx="24" cy="24" r="24" fill="#f0f3f7"/><circle cx="24" cy="22.5" r="7" fill="#cbd6e2"/><clipPath id="oc3"><circle cx="24" cy="24" r="24"/></clipPath><path d="M9.5 48C10 38 16 31.7 24 31.7C32 31.7 38 38 38.5 48Z" fill="#cbd6e2" clip-path="url(#oc3)"/></svg>
<div class="t" style="left:2436.0px;top:882.5px;font-size:29px;line-height:29px;color:#33475b;letter-spacing:0.26px;">Zoho Meeting (meeting...</div>
<div style="position:absolute;left:2865px;top:896.5px;width:8px;height:2.6px;background:#33475b"></div>
<div style="position:absolute;left:2877px;top:896.5px;width:8px;height:2.6px;background:#33475b"></div>
<div style="position:absolute;left:224px;top:1015px;width:2700px;height:2px;background:#dfe3eb"></div>
<div style="position:absolute;left:251px;top:956px;width:40px;height:40px;box-sizing:border-box;border:2px solid #cbd6e2;border-radius:7px;background:#fff"></div>
<div style="position:absolute;left:364px;top:952px;width:48px;height:48px;background:#425b76;border-radius:50%"></div>
<div class="t" style="left:364px;top:964.0px;width:48px;line-height:24px;text-align:center;font-size:24px;color:#fff;letter-spacing:-1px">S</div>
<div class="t" style="left:437.3px;top:962.5px;font-size:29px;line-height:29px;color:#0091ae;font-weight:700;letter-spacing:-0.08px;">Susan</div>
<div style="position:absolute;left:1245px;top:976.5px;width:8px;height:2.6px;background:#33475b"></div>
<div style="position:absolute;left:1257px;top:976.5px;width:8px;height:2.6px;background:#33475b"></div>
<div class="t" style="left:1363.5px;top:962.5px;font-size:29px;line-height:29px;color:#0091ae;font-weight:700;letter-spacing:0.1px;">susan77@example.com</div>
<div style="position:absolute;left:1865px;top:976.5px;width:8px;height:2.6px;background:#33475b"></div>
<div style="position:absolute;left:1877px;top:976.5px;width:8px;height:2.6px;background:#33475b"></div>
<svg style="position:absolute;left:2364px;top:952px" width="48" height="48" viewBox="0 0 48 48"><circle cx="24" cy="24" r="24" fill="#f0f3f7"/><circle cx="24" cy="22.5" r="7" fill="#cbd6e2"/><clipPath id="oc4"><circle cx="24" cy="24" r="24"/></clipPath><path d="M9.5 48C10 38 16 31.7 24 31.7C32 31.7 38 38 38.5 48Z" fill="#cbd6e2" clip-path="url(#oc4)"/></svg>
<div class="t" style="left:2436.0px;top:962.5px;font-size:29px;line-height:29px;color:#33475b;letter-spacing:0.26px;">Zoho Meeting (meeting...</div>
<div style="position:absolute;left:2865px;top:976.5px;width:8px;height:2.6px;background:#33475b"></div>
<div style="position:absolute;left:2877px;top:976.5px;width:8px;height:2.6px;background:#33475b"></div>
<div style="position:absolute;left:224px;top:1095px;width:2700px;height:2px;background:#dfe3eb"></div>
<div style="position:absolute;left:251px;top:1036px;width:40px;height:40px;box-sizing:border-box;border:2px solid #cbd6e2;border-radius:7px;background:#fff"></div>
<div style="position:absolute;left:364px;top:1032px;width:48px;height:48px;background:#425b76;border-radius:50%"></div>
<div class="t" style="left:364px;top:1044.0px;width:48px;line-height:24px;text-align:center;font-size:24px;color:#fff;letter-spacing:-1px">K</div>
<div class="t" style="left:437.3px;top:1042.5px;font-size:29px;line-height:29px;color:#0091ae;font-weight:700;letter-spacing:-0.08px;">Karen</div>
<div style="position:absolute;left:1245px;top:1056.5px;width:8px;height:2.6px;background:#33475b"></div>
<div style="position:absolute;left:1257px;top:1056.5px;width:8px;height:2.6px;background:#33475b"></div>
<div class="t" style="left:1363.5px;top:1042.5px;font-size:29px;line-height:29px;color:#0091ae;font-weight:700;letter-spacing:0.1px;">karen369@example.com</div>
<div style="position:absolute;left:1865px;top:1056.5px;width:8px;height:2.6px;background:#33475b"></div>
<div style="position:absolute;left:1877px;top:1056.5px;width:8px;height:2.6px;background:#33475b"></div>
<svg style="position:absolute;left:2364px;top:1032px" width="48" height="48" viewBox="0 0 48 48"><circle cx="24" cy="24" r="24" fill="#f0f3f7"/><circle cx="24" cy="22.5" r="7" fill="#cbd6e2"/><clipPath id="oc5"><circle cx="24" cy="24" r="24"/></clipPath><path d="M9.5 48C10 38 16 31.7 24 31.7C32 31.7 38 38 38.5 48Z" fill="#cbd6e2" clip-path="url(#oc5)"/></svg>
<div class="t" style="left:2436.0px;top:1042.5px;font-size:29px;line-height:29px;color:#33475b;letter-spacing:0.26px;">Zoho Meeting (meeting...</div>
<div style="position:absolute;left:2865px;top:1056.5px;width:8px;height:2.6px;background:#33475b"></div>
<div style="position:absolute;left:2877px;top:1056.5px;width:8px;height:2.6px;background:#33475b"></div>
<div style="position:absolute;left:224px;top:1175px;width:2700px;height:2px;background:#dfe3eb"></div>
<div style="position:absolute;left:251px;top:1116px;width:40px;height:40px;box-sizing:border-box;border:2px solid #cbd6e2;border-radius:7px;background:#fff"></div>
<div style="position:absolute;left:364px;top:1112px;width:48px;height:48px;background:#425b76;border-radius:50%"></div>
<div class="t" style="left:364px;top:1124.0px;width:48px;line-height:24px;text-align:center;font-size:24px;color:#fff;letter-spacing:-1px">JJ</div>
<div class="t" style="left:437.3px;top:1122.5px;font-size:29px;line-height:29px;color:#0091ae;font-weight:700;letter-spacing:-0.08px;">Jennifer Johnson</div>
<div style="position:absolute;left:1245px;top:1136.5px;width:8px;height:2.6px;background:#33475b"></div>
<div style="position:absolute;left:1257px;top:1136.5px;width:8px;height:2.6px;background:#33475b"></div>
<div class="t" style="left:1363.5px;top:1122.5px;font-size:29px;line-height:29px;color:#0091ae;font-weight:700;letter-spacing:0.1px;">jennifer356@example.com</div>
<div style="position:absolute;left:1865px;top:1136.5px;width:8px;height:2.6px;background:#33475b"></div>
<div style="position:absolute;left:1877px;top:1136.5px;width:8px;height:2.6px;background:#33475b"></div>
<svg style="position:absolute;left:2364px;top:1112px" width="48" height="48" viewBox="0 0 48 48"><circle cx="24" cy="24" r="24" fill="#f0f3f7"/><circle cx="24" cy="22.5" r="7" fill="#cbd6e2"/><clipPath id="oc6"><circle cx="24" cy="24" r="24"/></clipPath><path d="M9.5 48C10 38 16 31.7 24 31.7C32 31.7 38 38 38.5 48Z" fill="#cbd6e2" clip-path="url(#oc6)"/></svg>
<div class="t" style="left:2436.0px;top:1122.5px;font-size:29px;line-height:29px;color:#33475b;letter-spacing:0.26px;">Zoho Meeting (meeting...</div>
<div style="position:absolute;left:2865px;top:1136.5px;width:8px;height:2.6px;background:#33475b"></div>
<div style="position:absolute;left:2877px;top:1136.5px;width:8px;height:2.6px;background:#33475b"></div>
<div style="position:absolute;left:224px;top:1255px;width:2700px;height:2px;background:#dfe3eb"></div>
<div style="position:absolute;left:251px;top:1196px;width:40px;height:40px;box-sizing:border-box;border:2px solid #cbd6e2;border-radius:7px;background:#fff"></div>
<div style="position:absolute;left:364px;top:1192px;width:48px;height:48px;background:#425b76;border-radius:50%"></div>
<div class="t" style="left:364px;top:1204.0px;width:48px;line-height:24px;text-align:center;font-size:24px;color:#fff;letter-spacing:-1px">J</div>
<div class="t" style="left:437.3px;top:1202.5px;font-size:29px;line-height:29px;color:#0091ae;font-weight:700;letter-spacing:-0.08px;">Joseph</div>
<div style="position:absolute;left:1245px;top:1216.5px;width:8px;height:2.6px;background:#33475b"></div>
<div style="position:absolute;left:1257px;top:1216.5px;width:8px;height:2.6px;background:#33475b"></div>
<div class="t" style="left:1363.5px;top:1202.5px;font-size:29px;line-height:29px;color:#0091ae;font-weight:700;letter-spacing:0.1px;">joseph22@example.com</div>
<div style="position:absolute;left:1865px;top:1216.5px;width:8px;height:2.6px;background:#33475b"></div>
<div style="position:absolute;left:1877px;top:1216.5px;width:8px;height:2.6px;background:#33475b"></div>
<svg style="position:absolute;left:2364px;top:1192px" width="48" height="48" viewBox="0 0 48 48"><circle cx="24" cy="24" r="24" fill="#f0f3f7"/><circle cx="24" cy="22.5" r="7" fill="#cbd6e2"/><clipPath id="oc7"><circle cx="24" cy="24" r="24"/></clipPath><path d="M9.5 48C10 38 16 31.7 24 31.7C32 31.7 38 38 38.5 48Z" fill="#cbd6e2" clip-path="url(#oc7)"/></svg>
<div class="t" style="left:2436.0px;top:1202.5px;font-size:29px;line-height:29px;color:#33475b;letter-spacing:0.26px;">Zoho Meeting (meeting...</div>
<div style="position:absolute;left:2865px;top:1216.5px;width:8px;height:2.6px;background:#33475b"></div>
<div style="position:absolute;left:2877px;top:1216.5px;width:8px;height:2.6px;background:#33475b"></div>
<div style="position:absolute;left:224px;top:1335px;width:2700px;height:2px;background:#dfe3eb"></div>
<div style="position:absolute;left:251px;top:1276px;width:40px;height:40px;box-sizing:border-box;border:2px solid #cbd6e2;border-radius:7px;background:#fff"></div>
<div style="position:absolute;left:364px;top:1272px;width:48px;height:48px;background:#425b76;border-radius:50%"></div>
<div class="t" style="left:364px;top:1284.0px;width:48px;line-height:24px;text-align:center;font-size:24px;color:#fff;letter-spacing:-1px">PS</div>
<div class="t" style="left:437.3px;top:1282.5px;font-size:29px;line-height:29px;color:#0091ae;font-weight:700;letter-spacing:-0.08px;">Patricia Smith</div>
<div style="position:absolute;left:1245px;top:1296.5px;width:8px;height:2.6px;background:#33475b"></div>
<div style="position:absolute;left:1257px;top:1296.5px;width:8px;height:2.6px;background:#33475b"></div>
<div class="t" style="left:1363.5px;top:1282.5px;font-size:29px;line-height:29px;color:#0091ae;font-weight:700;letter-spacing:0.1px;">patricia138@example.com</div>
<div style="position:absolute;left:1865px;top:1296.5px;width:8px;height:2.6px;background:#33475b"></div>
<div style="position:absolute;left:1877px;top:1296.5px;width:8px;height:2.6px;background:#33475b"></div>
<svg style="position:absolute;left:2364px;top:1272px" width="48" height="48" viewBox="0 0 48 48"><circle cx="24" cy="24" r="24" fill="#f0f3f7"/><circle cx="24" cy="22.5" r="7" fill="#cbd6e2"/><clipPath id="oc8"><circle cx="24" cy="24" r="24"/></clipPath><path d="M9.5 48C10 38 16 31.7 24 31.7C32 31.7 38 38 38.5 48Z" fill="#cbd6e2" clip-path="url(#oc8)"/></svg>
<div class="t" style="left:2436.0px;top:1282.5px;font-size:29px;line-height:29px;color:#33475b;letter-spacing:0.26px;">Zoho Meeting (meeting...</div>
<div style="position:absolute;left:2865px;top:1296.5px;width:8px;height:2.6px;background:#33475b"></div>
<div style="position:absolute;left:2877px;top:1296.5px;width:8px;height:2.6px;background:#33475b"></div>
<div style="position:absolute;left:224px;top:1415px;width:2700px;height:2px;background:#dfe3eb"></div>
<div style="position:absolute;left:251px;top:1356px;width:40px;height:40px;box-sizing:border-box;border:2px solid #cbd6e2;border-radius:7px;background:#fff"></div>
<div style="position:absolute;left:364px;top:1352px;width:48px;height:48px;background:#425b76;border-radius:50%"></div>
<div class="t" style="left:364px;top:1364.0px;width:48px;line-height:24px;text-align:center;font-size:24px;color:#fff;letter-spacing:-1px">NJ</div>
<div class="t" style="left:437.3px;top:1362.5px;font-size:29px;line-height:29px;color:#0091ae;font-weight:700;letter-spacing:-0.08px;">Nancy Johnson</div>
<div style="position:absolute;left:1245px;top:1376.5px;width:8px;height:2.6px;background:#33475b"></div>
<div style="position:absolute;left:1257px;top:1376.5px;width:8px;height:2.6px;background:#33475b"></div>
<div class="t" style="left:1363.5px;top:1362.5px;font-size:29px;line-height:29px;color:#0091ae;font-weight:700;letter-spacing:0.1px;">nancy458@example.com</div>
<div style="position:absolute;left:1865px;top:1376.5px;width:8px;height:2.6px;background:#33475b"></div>
<div style="position:absolute;left:1877px;top:1376.5px;width:8px;height:2.6px;background:#33475b"></div>
<svg style="position:absolute;left:2364px;top:1352px" width="48" height="48" viewBox="0 0 48 48"><circle cx="24" cy="24" r="24" fill="#f0f3f7"/><circle cx="24" cy="22.5" r="7" fill="#cbd6e2"/><clipPath id="oc9"><circle cx="24" cy="24" r="24"/></clipPath><path d="M9.5 48C10 38 16 31.7 24 31.7C32 31.7 38 38 38.5 48Z" fill="#cbd6e2" clip-path="url(#oc9)"/></svg>
<div class="t" style="left:2436.0px;top:1362.5px;font-size:29px;line-height:29px;color:#33475b;letter-spacing:0.26px;">Zoho Meeting (meeting...</div>
<div style="position:absolute;left:2865px;top:1376.5px;width:8px;height:2.6px;background:#33475b"></div>
<div style="position:absolute;left:2877px;top:1376.5px;width:8px;height:2.6px;background:#33475b"></div>
<div style="position:absolute;left:224px;top:1495px;width:2700px;height:2px;background:#dfe3eb"></div>
<div style="position:absolute;left:251px;top:1436px;width:40px;height:40px;box-sizing:border-box;border:2px solid #cbd6e2;border-radius:7px;background:#fff"></div>
<div style="position:absolute;left:364px;top:1432px;width:48px;height:48px;background:#425b76;border-radius:50%"></div>
<div class="t" style="left:364px;top:1444.0px;width:48px;line-height:24px;text-align:center;font-size:24px;color:#fff;letter-spacing:-1px">RJ</div>
<div class="t" style="left:437.3px;top:1442.5px;font-size:29px;line-height:29px;color:#0091ae;font-weight:700;letter-spacing:-0.08px;">Ruth Johnson</div>
<div style="position:absolute;left:1245px;top:1456.5px;width:8px;height:2.6px;background:#33475b"></div>
<div style="position:absolute;left:1257px;top:1456.5px;width:8px;height:2.6px;background:#33475b"></div>
<div class="t" style="left:1363.5px;top:1442.5px;font-size:29px;line-height:29px;color:#0091ae;font-weight:700;letter-spacing:0.1px;">ruth493@example.com</div>
<div style="position:absolute;left:1865px;top:1456.5px;width:8px;height:2.6px;background:#33475b"></div>
<div style="position:absolute;left:1877px;top:1456.5px;width:8px;height:2.6px;background:#33475b"></div>
<svg style="position:absolute;left:2364px;top:1432px" width="48" height="48" viewBox="0 0 48 48"><circle cx="24" cy="24" r="24" fill="#f0f3f7"/><circle cx="24" cy="22.5" r="7" fill="#cbd6e2"/><clipPath id="oc10"><circle cx="24" cy="24" r="24"/></clipPath><path d="M9.5 48C10 38 16 31.7 24 31.7C32 31.7 38 38 38.5 48Z" fill="#cbd6e2" clip-path="url(#oc10)"/></svg>
<div class="t" style="left:2436.0px;top:1442.5px;font-size:29px;line-height:29px;color:#33475b;letter-spacing:0.26px;">Zoho Meeting (meeting...</div>
<div style="position:absolute;left:2865px;top:1456.5px;width:8px;height:2.6px;background:#33475b"></div>
<div style="position:absolute;left:2877px;top:1456.5px;width:8px;height:2.6px;background:#33475b"></div>
<div style="position:absolute;left:224px;top:1575px;width:2700px;height:2px;background:#dfe3eb"></div>
<div style="position:absolute;left:251px;top:1516px;width:40px;height:40px;box-sizing:border-box;border:2px solid #cbd6e2;border-radius:7px;background:#fff"></div>
<div style="position:absolute;left:364px;top:1512px;width:48px;height:48px;background:#425b76;border-radius:50%"></div>
<div class="t" style="left:364px;top:1524.0px;width:48px;line-height:24px;text-align:center;font-size:24px;color:#fff;letter-spacing:-1px">CM</div>
<div class="t" style="left:437.3px;top:1522.5px;font-size:29px;line-height:29px;color:#0091ae;font-weight:700;letter-spacing:-0.08px;">Cynthia Miller</div>
<div style="position:absolute;left:1245px;top:1536.5px;width:8px;height:2.6px;background:#33475b"></div>
<div style="position:absolute;left:1257px;top:1536.5px;width:8px;height:2.6px;background:#33475b"></div>
<div class="t" style="left:1363.5px;top:1522.5px;font-size:29px;line-height:29px;color:#0091ae;font-weight:700;letter-spacing:0.1px;">cynthia399@example.com</div>
<div style="position:absolute;left:1865px;top:1536.5px;width:8px;height:2.6px;background:#33475b"></div>
<div style="position:absolute;left:1877px;top:1536.5px;width:8px;height:2.6px;background:#33475b"></div>
<svg style="position:absolute;left:2364px;top:1512px" width="48" height="48" viewBox="0 0 48 48"><circle cx="24" cy="24" r="24" fill="#f0f3f7"/><circle cx="24" cy="22.5" r="7" fill="#cbd6e2"/><clipPath id="oc11"><circle cx="24" cy="24" r="24"/></clipPath><path d="M9.5 48C10 38 16 31.7 24 31.7C32 31.7 38 38 38.5 48Z" fill="#cbd6e2" clip-path="url(#oc11)"/></svg>
<div class="t" style="left:2436.0px;top:1522.5px;font-size:29px;line-height:29px;color:#33475b;letter-spacing:0.26px;">Zoho Meeting (meeting...</div>
<div style="position:absolute;left:2865px;top:1536.5px;width:8px;height:2.6px;background:#33475b"></div>
<div style="position:absolute;left:2877px;top:1536.5px;width:8px;height:2.6px;background:#33475b"></div>
<div style="position:absolute;left:251px;top:1596px;width:40px;height:40px;box-sizing:border-box;border:2px solid #cbd6e2;border-radius:7px;background:#fff"></div>
<div style="position:absolute;left:364px;top:1592px;width:48px;height:48px;background:#425b76;border-radius:50%"></div>
<div class="t" style="left:364px;top:1604.0px;width:48px;line-height:24px;text-align:center;font-size:24px;color:#fff;letter-spacing:-1px">SS</div>
<div class="t" style="left:437.3px;top:1602.5px;font-size:29px;line-height:29px;color:#0091ae;font-weight:700;letter-spacing:-0.08px;">Susan Smith</div>
<div style="position:absolute;left:1245px;top:1616.5px;width:8px;height:2.6px;background:#33475b"></div>
<div style="position:absolute;left:1257px;top:1616.5px;width:8px;height:2.6px;background:#33475b"></div>
<div class="t" style="left:1363.5px;top:1602.5px;font-size:29px;line-height:29px;color:#0091ae;font-weight:700;letter-spacing:0.1px;">susan422@example.com</div>
<div style="position:absolute;left:1865px;top:1616.5px;width:8px;height:2.6px;background:#33475b"></div>
<div style="position:absolute;left:1877px;top:1616.5px;width:8px;height:2.6px;background:#33475b"></div>
<svg style="position:absolute;left:2364px;top:1592px" width="48" height="48" viewBox="0 0 48 48"><circle cx="24" cy="24" r="24" fill="#f0f3f7"/><circle cx="24" cy="22.5" r="7" fill="#cbd6e2"/><clipPath id="oc12"><circle cx="24" cy="24" r="24"/></clipPath><path d="M9.5 48C10 38 16 31.7 24 31.7C32 31.7 38 38 38.5 48Z" fill="#cbd6e2" clip-path="url(#oc12)"/></svg>
<div class="t" style="left:2436.0px;top:1602.5px;font-size:29px;line-height:29px;color:#33475b;letter-spacing:0.26px;">Zoho Meeting (meeting...</div>
<div style="position:absolute;left:2865px;top:1616.5px;width:8px;height:2.6px;background:#33475b"></div>
<div style="position:absolute;left:2877px;top:1616.5px;width:8px;height:2.6px;background:#33475b"></div></div>
<div style="position:absolute;left:2890px;top:617px;width:34px;height:1006px;background:linear-gradient(to right,rgba(223,227,235,0),rgba(223,227,235,0.45))"></div>
<div style="position:absolute;left:224px;top:1590px;width:2700px;height:33px;background:linear-gradient(to bottom,rgba(245,248,250,0),rgba(245,248,250,0.97))"></div>
<svg style="position:absolute;left:952px;top:1650px" width="22" height="30" viewBox="0 0 22 30"><path d="M17 2L5 15L17 28" fill="none" stroke="#0091ae" stroke-width="3.2" stroke-linecap="round" stroke-linejoin="round"/></svg>
<div class="t" style="left:997.0px;top:1650.5px;font-size:28.5px;line-height:28.5px;color:#0091ae;font-weight:700;letter-spacing:-0.6px;">Prev</div>
<div style="position:absolute;left:1139.5px;top:1635px;width:43.5px;height:60px;box-sizing:border-box;border:2px solid #7fd1de;border-radius:6px;background:#e5f5f8"></div>
<div class="t" style="left:1140px;top:1650.5px;width:43px;text-align:center;font-size:28.5px;line-height:28.5px;font-weight:700;color:#0091ae">2</div>
<div class="t" style="left:1053px;top:1650.5px;width:80px;text-align:center;font-size:28.5px;line-height:28.5px;font-weight:700;color:#0091ae">1</div>
<div class="t" style="left:1189px;top:1650.5px;width:80px;text-align:center;font-size:28.5px;line-height:28.5px;font-weight:700;color:#0091ae">3</div>
<div class="t" style="left:1258px;top:1650.5px;width:80px;text-align:center;font-size:28.5px;line-height:28.5px;font-weight:700;color:#0091ae">4</div>
<div class="t" style="left:1327px;top:1650.5px;width:80px;text-align:center;font-size:28.5px;line-height:28.5px;font-weight:700;color:#0091ae">5</div>
<div class="t" style="left:1395px;top:1650.5px;width:80px;text-align:center;font-size:28.5px;line-height:28.5px;font-weight:700;color:#0091ae">6</div>
<div class="t" style="left:1463px;top:1650.5px;width:80px;text-align:center;font-size:28.5px;line-height:28.5px;font-weight:700;color:#0091ae">7</div>
<div class="t" style="left:1531px;top:1650.5px;width:80px;text-align:center;font-size:28.5px;line-height:28.5px;font-weight:700;color:#0091ae">8</div>
<div class="t" style="left:1600px;top:1650.5px;width:80px;text-align:center;font-size:28.5px;line-height:28.5px;font-weight:700;color:#0091ae">9</div>
<div class="t" style="left:1676px;top:1650.5px;width:80px;text-align:center;font-size:28.5px;line-height:28.5px;font-weight:700;color:#0091ae">10</div>
<div class="t" style="left:1760px;top:1650.5px;width:80px;text-align:center;font-size:28.5px;line-height:28.5px;font-weight:700;color:#0091ae">11</div>
<div style="position:absolute;left:1829px;top:1635px;width:142px;height:60px;box-sizing:border-box;border:4px solid #00a4bd;border-radius:7px;background:#fff"></div>
<div class="t" style="left:1845.0px;top:1650.5px;font-size:28.5px;line-height:28.5px;color:#0091ae;font-weight:700;letter-spacing:1px;">Next</div>
<svg style="position:absolute;left:1931px;top:1650px" width="22" height="30" viewBox="0 0 22 30"><path d="M5 2L17 15L5 28" fill="none" stroke="#0091ae" stroke-width="3.2" stroke-linecap="round" stroke-linejoin="round"/></svg>
<div class="t" style="left:1998.5px;top:1650.5px;font-size:28.5px;line-height:28.5px;color:#0091ae;font-weight:700;letter-spacing:0.7px;">25 per page</div>
<svg style="position:absolute;left:2172px;top:1660px" width="17" height="10" viewBox="0 0 17 10"><path d="M0.5 0.5H16L8.2 9Z" fill="#0091ae"/></svg>
</body></html>
